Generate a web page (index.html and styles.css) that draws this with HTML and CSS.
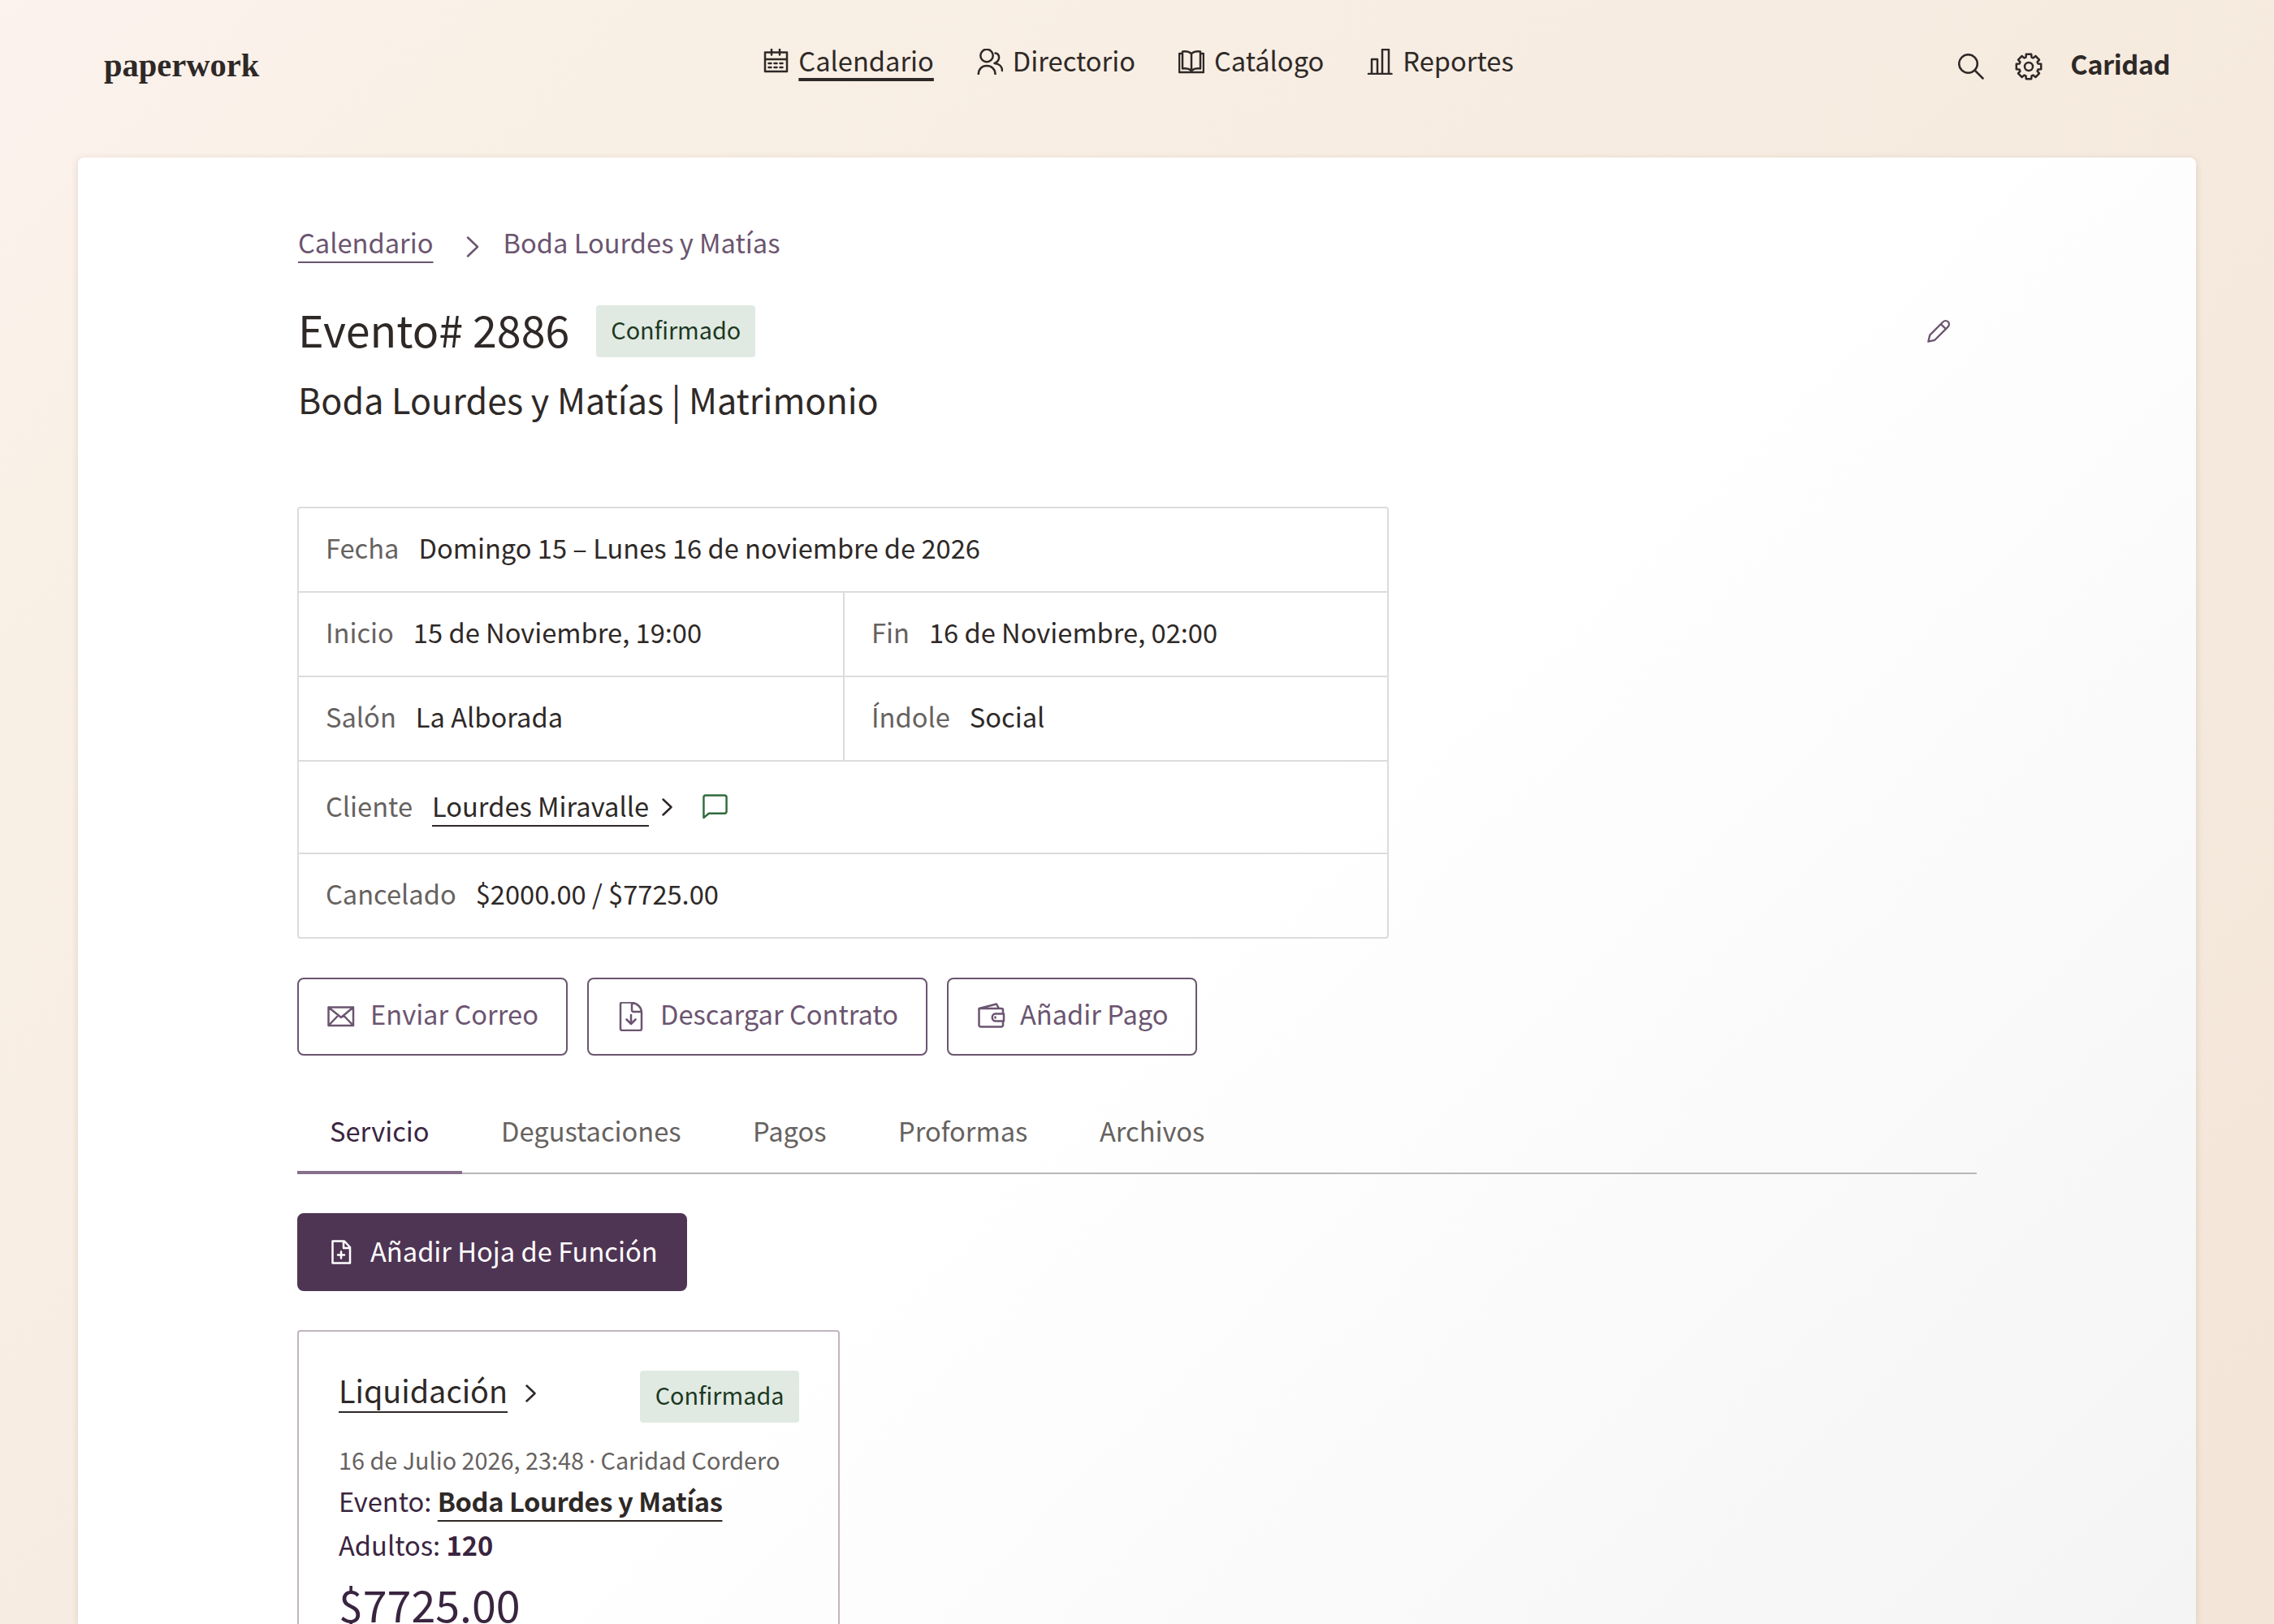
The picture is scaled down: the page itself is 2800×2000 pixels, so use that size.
FILE: index.html
```html
<!DOCTYPE html>
<html lang="es">
<head>
  <meta charset="UTF-8">
  <meta name="viewport" content="width=device-width, initial-scale=1.0">
  <title>Evento# 2886 | paperwork</title>
  <link rel="stylesheet" href="styles.css">
</head>
<body>
  <header class="header">
    <a href="#" class="logo">paperwork</a>
    <nav class="nav">
      <a href="#" class="nav-link active">
        <svg class="icon" viewBox="0 0 32 32"><path d="M3 4.500h27V28H3zM3 13h27M11 .5v7M21 .5v7"/><path d="M7.500 18h3M14.500 18h3M21.500 18h3M7.500 23h3M14.500 23h3M21.500 23h3"/></svg>
        <span>Calendario</span>
      </a>
      <a href="#" class="nav-link">
        <svg class="icon" viewBox="0 0 32 32"><circle cx="12" cy="8.500" r="7.700"/><path d="M1.800 31.500c0-6.500 4.300-10.500 10.200-10.500s10.500 4 10.500 10.500M22.500 5.500c5 .5 7.500 8.500-1 12.500 6 .5 9.500 4 9.500 9"/></svg>
        <span>Directorio</span>
      </a>
      <a href="#" class="nav-link">
        <svg class="icon" viewBox="0 0 32 32"><path d="M5 6H1v23h30V6h-4M16 6c-3-2.500-7-3-11-2.500v21c4-.5 8 0 11 2.500 3-2.500 7-3 11-2.500v-21C23 3 19 3.500 16 6zM16 6v21"/></svg>
        <span>Catálogo</span>
      </a>
      <a href="#" class="nav-link">
        <svg class="icon" viewBox="0 0 32 32"><path d="M2 31h28.500M6 31V13h7v18M19 31V1h8v30"/></svg>
        <span>Reportes</span>
      </a>
    </nav>
    <div class="user-menu">
      <svg class="icon" viewBox="0 0 32 32"><circle cx="12.500" cy="12.500" r="11.300"/><path d="M20.500 20.500l10 10"/></svg>
      <svg class="icon gear" viewBox="0 0 34 34"><path d="M28.500 13.500L32.200 13.800V20.200L28.500 20.500L27.600 22.600L30 25.400L25.400 30L22.600 27.600L20.500 28.500L20.200 32.200H13.800L13.500 28.500L11.400 27.600L8.600 30L4 25.400L6.400 22.600L5.500 20.500L1.800 20.200V13.800L5.500 13.500L6.400 11.400L4 8.600L8.600 4L11.400 6.400L13.500 5.500L13.800 1.800H20.200L20.500 5.500L22.600 6.400L25.400 4L30 8.600L27.600 11.400z"/><circle cx="17" cy="17" r="5"/></svg>
      <span class="user-name">Caridad</span>
    </div>
  </header>

  <main class="page">
    <nav class="breadcrumb">
      <a href="#" class="link">Calendario</a>
      <svg class="chevron" viewBox="0 0 16 26"><path d="M2 1.500L14 13L2 24.500"/></svg>
      <span>Boda Lourdes y Matías</span>
    </nav>

    <div class="title-row">
      <h1>Evento# 2886</h1>
      <span class="badge">Confirmado</span>
      <a href="#" class="edit">
        <svg class="icon" viewBox="0 0 32 32"><path d="M2.500 29.500l2-8.500L21.500 4c5-5 11.500 1.500 6.500 6.500L11 27.500zM19 6.500l6.500 6.500"/></svg>
      </a>
    </div>
    <h2>Boda Lourdes y Matías | Matrimonio</h2>

    <dl class="details">
      <div class="wide"><dt>Fecha</dt><dd>Domingo 15 – Lunes 16 de noviembre de 2026</dd></div>
      <div class="half"><dt>Inicio</dt><dd>15 de Noviembre, 19:00</dd></div>
      <div><dt>Fin</dt><dd>16 de Noviembre, 02:00</dd></div>
      <div class="half"><dt>Salón</dt><dd>La Alborada</dd></div>
      <div><dt>Índole</dt><dd>Social</dd></div>
      <div class="wide client">
        <dt>Cliente</dt>
        <dd><a href="#" class="link">Lourdes Miravalle</a></dd>
        <svg class="chevron small" viewBox="0 0 13 22"><path d="M1.500 1.500L11.500 11L1.500 20.500"/></svg>
        <svg class="icon chat" viewBox="0 0 32 32"><path d="M1.500 30V4c0-1.500 1-2.500 2.500-2.500h24c1.500 0 2.500 1 2.500 2.500v18c0 1.500-1 2.500-2.500 2.500H8z"/></svg>
      </div>
      <div class="wide"><dt>Cancelado</dt><dd>$2000.00 / $7725.00</dd></div>
    </dl>

    <div class="actions">
      <button class="btn">
        <svg class="icon" viewBox="0 0 36 36"><path d="M2.500 6.500h30.500v22.500H2.500zM2.500 6.500L18 19L33 6.500M2.500 29l12-12.500M33 29L21 16.500"/></svg>
        <span>Enviar Correo</span>
      </button>
      <button class="btn">
        <svg class="icon" viewBox="0 0 36 36"><path d="M5 3c0-1.500 1-2.500 2-2.500h11c8 1 13 6 13 13V33c0 1-1 2-2 2H7c-1 0-2-1-2-2zM19 1v9c0 1 1 2 2 2h9M18 16v10M12.500 21.500L18 27l5.500-5.500"/></svg>
        <span>Descargar Contrato</span>
      </button>
      <button class="btn">
        <svg class="icon" viewBox="0 0 36 36"><path d="M33 14.500V10c0-1.500-1-2-2-2H3.500v20.500c0 1 1 2 2 2h25.500c1 0 2-1 2-2V24M3.500 8L25 2.500L28 8M23.500 14.500H34v9H23.500c-5 0-5-9 0-9zM23.500 18.500v1"/></svg>
        <span>Añadir Pago</span>
      </button>
    </div>

    <nav class="tabs">
      <a href="#" class="tab active">Servicio</a>
      <a href="#" class="tab">Degustaciones</a>
      <a href="#" class="tab">Pagos</a>
      <a href="#" class="tab">Proformas</a>
      <a href="#" class="tab">Archivos</a>
    </nav>

    <button class="btn primary">
      <svg class="icon" viewBox="0 0 36 36"><path d="M7.500 4.500H22l7 7.500V31.500H7.500zM21 5v8h8M18 17.500v8M14 21.500h8"/></svg>
      <span>Añadir Hoja de Función</span>
    </button>

    <article class="card">
      <div class="card-head">
        <h3><a href="#" class="link">Liquidación</a></h3>
        <svg class="chevron small" viewBox="0 0 13 22"><path d="M1.500 1.500L11.500 11L1.500 20.500"/></svg>
        <span class="badge">Confirmada</span>
      </div>
      <p class="meta">16 de Julio 2026, 23:48 <span class="dot">·</span> Caridad Cordero</p>
      <p>Evento: <a href="#" class="link strong">Boda Lourdes y Matías</a></p>
      <p>Adultos: <strong>120</strong></p>
      <p class="price">$7725.00</p>
    </article>
  </main>
</body>
</html>
```

FILE: styles.css
```css
* { margin: 0; padding: 0; box-sizing: border-box; }
body {
  height: 2000px;
  overflow: hidden;
  display: flex;
  flex-direction: column;
  font-family: "Noto Sans CJK SC", sans-serif;
  font-size: 32.65px;
  line-height: 48px;
  color: #2e2927;
  background: linear-gradient(135deg, #fcf2ee 0%, #f9f0e6 14%, #f3e5d8 100%);
}
a { color: inherit; text-decoration: none; }
svg {
  display: block;
  flex: none;
  fill: none;
  stroke: currentColor;
  stroke-width: 2.5;
  stroke-linecap: round;
  stroke-linejoin: round;
}
.icon { width: 32px; height: 32px; }
.link {
  text-decoration: underline;
  text-decoration-thickness: 2px;
  text-underline-offset: 10px;
  text-decoration-skip-ink: none;
}

/* header */
.header {
  flex: none;
  height: 194px;
  padding: 52px 128px 0;
  display: grid;
  grid-template-columns: 1fr auto 1fr;
  align-items: start;
}
.logo {
  margin-top: 7px;
  font: bold 40.5px/44px "Liberation Serif", serif;
}
.nav { display: flex; gap: 53px; margin-left: 3px; }
.nav-link { display: flex; align-items: center; gap: 12px; height: 48px; }
.nav-link span { line-height: 44px; padding-bottom: 4px; }
.nav-link.active span {
  text-decoration: underline;
  text-decoration-thickness: 4px;
  text-underline-offset: 8px;
}
.user-menu {
  display: flex;
  justify-content: flex-end;
  align-items: center;
  margin-top: 4px;
}
.gear { width: 34px; height: 34px; margin: 0 34px 0 38px; }
.user-name {
  font-weight: bold;
  letter-spacing: -0.5px;
  line-height: 44px;
  padding-bottom: 8px;
}

/* page */
.page {
  flex: 1;
  min-height: 0;
  margin: 0 96px;
  padding: 80px 270px 0;
  overflow: hidden;
  border-radius: 8px 8px 0 0;
  background: linear-gradient(135deg, #fff 52%, #f4f4f4 100%);
  box-shadow: 0 2px 8px rgba(90, 60, 30, 0.16);
}
.breadcrumb {
  display: flex;
  align-items: center;
  padding-left: 1px;
  color: #6b5570;
}
.chevron { width: 16px; height: 26px; margin: 12px 30px 0 40px; }
.chevron.small { width: 13px; height: 22px; margin: 0; }
.title-row {
  display: flex;
  align-items: center;
  height: 64px;
  margin-top: 54px;
}
h1, h2, h3 { font-weight: normal; }
h1 { font-size: 53.7px; line-height: 60px; padding: 0 0 6px 1px; }
h2 { font-size: 43.1px; line-height: 60px; margin-top: 21px; padding-left: 1px; }
.badge {
  height: 64px;
  padding: 0 18px;
  font-size: 28.8px;
  line-height: 59px;
  border-radius: 4px;
  color: #1c3822;
  background: #e1eae2;
}
.title-row .badge { margin-left: 33px; }
.edit { margin-left: auto; margin-right: 32px; color: #6b5570; }
.edit .icon { width: 30px; height: 30px; }

/* details table */
.details {
  width: 1344px;
  margin-top: 103px;
  display: grid;
  grid-template-columns: 672px 1fr;
  border: 2px solid #dcdcdc;
  border-radius: 4px;
}
.details > div {
  display: flex;
  align-items: center;
  gap: 24px;
  height: 104px;
  padding: 0 33px 6px;
  border-bottom: 2px solid #dcdcdc;
}
.details .half { border-right: 2px solid #dcdcdc; }
.details .wide { grid-column: 1 / 3; }
.details .client { height: 114px; padding-bottom: 4px; }
.details > div:last-child { height: 102px; border-bottom: 0; }
.details dt { color: #66625f; }
.client .chevron { margin: 4px 0 0 -8px; }
.client .chat { margin-left: 13px; color: #2f6b3c; width: 31px; height: 31px; margin-top: 2px; }

/* buttons */
.actions { display: flex; gap: 24px; margin-top: 48px; }
.btn {
  display: flex;
  align-items: center;
  gap: 18px;
  height: 96px;
  padding: 0 34px;
  font: inherit;
  color: #6b5570;
  background: none;
  border: 2px solid #6b5570;
  border-radius: 8px;
}
.btn .icon { width: 36px; height: 36px; }
.btn span { padding-bottom: 8px; }
.btn.primary {
  margin-top: 48px;
  color: #fff;
  background: #4f3554;
  border-color: #4f3554;
}
.btn.primary span { padding-bottom: 4px; }

/* tabs */
.tabs {
  display: flex;
  gap: 8.5px;
  margin-top: 68px;
  color: #66625f;
  border-bottom: 2px solid #b9b7b9;
}
.tab { padding: 0 40px 26px; margin-bottom: -2px; border-bottom: 4px solid transparent; }
.tab.active { color: #3a2540; border-color: #87708b; }

/* event sheet card */
.card {
  width: 668px;
  height: 520px;
  margin-top: 48px;
  padding: 48px 48px 48px 49px;
  line-height: 54px;
  color: #3a2540;
  border: 2px solid #c0b5c0;
  border-radius: 4px;
}
.card-head { display: flex; align-items: flex-start; color: #2e2927; }
.card-head .chevron { margin: 17px 0 0 22px; }
.card-head .badge { margin-left: auto; padding: 0 18.5px; }
h3 { font-size: 37.8px; line-height: 48px; }
.meta { margin: 24px 0 1px; font-size: 28.8px; line-height: 44px; color: #66625f; }
.dot { font-family: "Noto Sans", sans-serif; line-height: 1; }
.strong { font-weight: bold; letter-spacing: -0.4px; color: #2e2927; }
.price { margin-top: 10px; font-size: 53.7px; line-height: 72px; }
```
